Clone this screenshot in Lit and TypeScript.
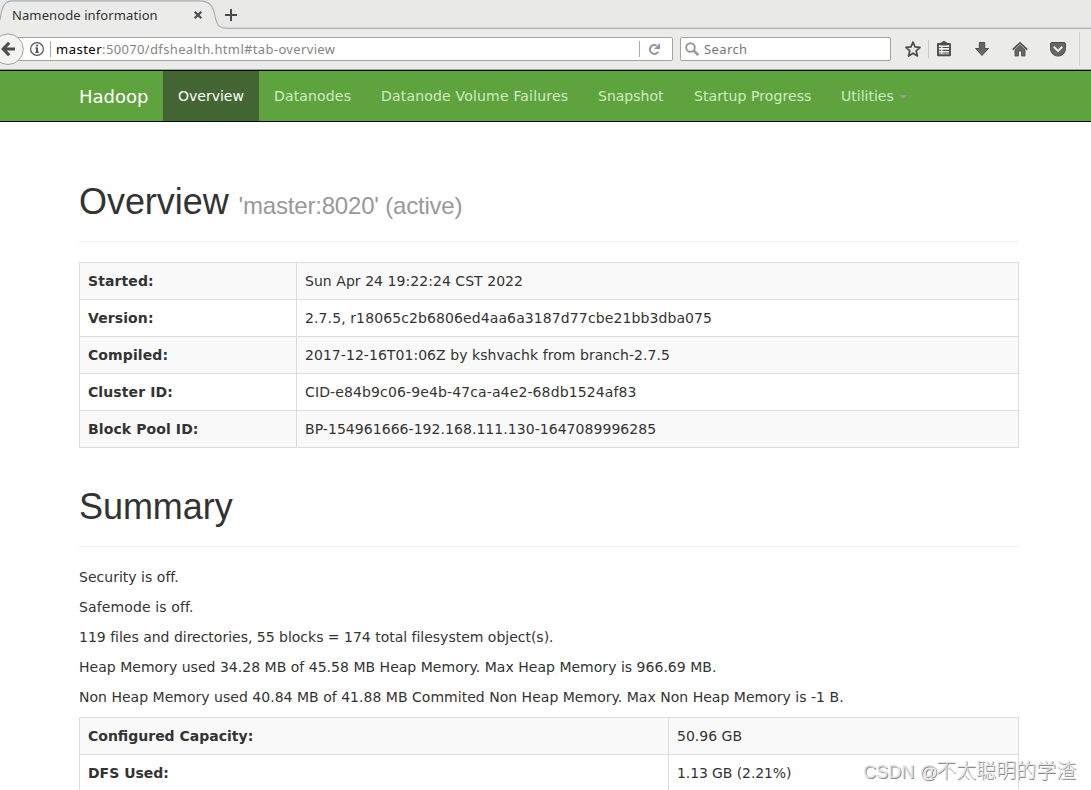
import { LitElement, html, css } from "lit";
import { customElement } from "lit/decorators.js";

@customElement("browser-chrome")
class BrowserChrome extends LitElement {
  static styles = css`
    :host { display: block; position: relative; height: 71px; box-sizing: border-box; background: #ebebe9; border-bottom: 1px solid #0a0a0a; font: 13px "Noto Sans", "Open Sans", sans-serif; color: #2e3436; }
    .line { position: absolute; left: 0; right: 0; bottom: 0; height: 1px; background: #a3a3a1; }
    .tabs { position: relative; height: 29px; display: flex; align-items: center; background: #e8e8e6; }
    .shape { position: absolute; left: 0; top: 0; }
    .title { position: relative; margin-left: 12px; width: 181px; line-height: 18px; padding-top: 1px; letter-spacing: 0.1px; white-space: nowrap; }
    .close { position: relative; width: 10px; height: 10px; }
    .plus { position: relative; margin-left: 21px; width: 14px; height: 14px; }
    .bar { height: 41px; display: flex; align-items: center; position: relative; }
    .url { box-sizing: border-box; width: 673px; height: 24px; margin-top: -1px; border: 1px solid #a3a3a1; border-left: 0; border-radius: 0 2px 2px 0; background: #fff; display: flex; align-items: center; color: #858585; }
    .back { position: absolute; left: -8px; top: 4px; }
    .info { margin-left: 29px; display: block; }
    .sep { width: 1px; height: 16px; background: #aaa; margin: 0 5px 0 5px; }
    .addr { flex: 1; white-space: nowrap; letter-spacing: 0.35px; }
    .host { color: #000; letter-spacing: 0.5px; }
    .reload { margin: 0 11px 0 3px; display: block; }
    .search { box-sizing: border-box; width: 211px; height: 24px; margin: -1px 0 0 7px; border: 1px solid #a3a3a1; border-radius: 2px; background: #fff; display: flex; align-items: center; color: #777; gap: 5px; padding-left: 4px; letter-spacing: 0.4px; }
    .icons { flex: 1; height: 41px; display: block; }
    svg { display: block; }
  `;
  render() {
    return html`
      <div class="tabs">
        <svg class="shape" width="1091" height="29">
          <path d="M0 29V14C3 4 5 .8 12 .8H201C212 .8 213 6 215 16C217 26 219 28.3 228 28.3H1091V29Z" fill="#ebebe9"/>
          <path d="M0 20C2 5 5 .8 13 .8H199C210 .8 213 6 215 16C217 26 219 28.3 228 28.3H1091" fill="none" stroke="#a8adb2" stroke-width="1.2"/>
        </svg>
        <span class="title">Namenode information</span>
        <svg class="close" viewBox="0 0 10 10"><path d="M1.7 1.7L8.3 8.3M8.3 1.7L1.7 8.3" stroke="#4c4f50" stroke-width="2.2"/></svg>
        <svg class="plus" viewBox="0 0 14 14"><path d="M7 1V13M1 7H13" stroke="#4a4a4a" stroke-width="2"/></svg>
      </div>
      <div class="bar">
        <div class="url">
          <svg class="info" width="16" height="16" viewBox="0 0 16 16"><circle cx="8" cy="8" r="6.4" fill="none" stroke="#555" stroke-width="1.2"/><path d="M6.4 7H8V11M6.2 11.4H9.9" stroke="#555" stroke-width="1.3" fill="none"/><path d="M8 7V11" stroke="#555" stroke-width="2"/><circle cx="8" cy="4.6" r="1.1" fill="#555"/></svg>
          <span class="sep"></span>
          <span class="addr"><span class="host">master</span>:50070/dfshealth.html#tab-overview</span>
          <span class="sep"></span>
          <svg class="reload" width="13" height="14" viewBox="0 0 13 14"><path d="M10.3 9.8A4.5 4.5 0 1 1 8.7 3.5" fill="none" stroke="#8796a5" stroke-width="2"/><path d="M12 1V7H6Z" fill="#8796a5"/></svg>
        </div>
        <svg class="back" width="33" height="33" viewBox="0 0 33 33"><circle cx="16" cy="16.2" r="15.3" fill="#f3f3f2" stroke="#a3a3a1"/><path d="M17.2 9.7L11.2 16L17.2 22.3M11.4 16H23" fill="none" stroke="#4d4d4d" stroke-width="3.1"/></svg>
        <div class="search">
          <svg width="14" height="14" viewBox="0 0 14 14"><circle cx="5.5" cy="5.5" r="4.3" fill="none" stroke="#979797" stroke-width="1.9"/><path d="M8.5 8.5L13.2 13" stroke="#979797" stroke-width="2.5"/></svg>
          <span>Search</span>
        </div>
        <svg class="icons" viewBox="891 29 200 41">
          <path d="M913 42L915 46.8L920 47.3L916.2 50.8L917.4 56L913 53.2L908.6 56L909.8 50.8L906 47.3L911 46.8Z" fill="none" stroke="#4d4d4d" stroke-width="1.7" stroke-linejoin="round"/>
          <path d="M928.5 40V58" stroke="#c9c9c7"/>
          <path d="M938 44H950V55.3H938Z" fill="#f3f3f2" stroke="#4d4d4d" stroke-width="1.9" stroke-linejoin="round"/>
          <path d="M940.3 43L944 40.8L947.7 43V45.4H940.3Z" fill="#4d4d4d"/>
          <path d="M942.5 47.5H949M942.5 50.3H949M942.5 53H949M939.3 47.5H941M939.3 50.3H941M939.3 53H941" stroke="#4d4d4d" stroke-width="1.2"/>
          <path d="M979.3 42.5H984.7V48.5H988.5L982 55.5L975.5 48.5H979.3Z" fill="#666" stroke="#4d4d4d"/>
          <path d="M1012.8 49.6L1020 42.9L1027.2 49.6" fill="none" stroke="#4d4d4d" stroke-width="1.7"/>
          <path d="M1015 49.7L1020 45.2L1025 49.7V56H1021.5V51H1018.5V56H1015Z" fill="#666" stroke="#4d4d4d" stroke-width=".8"/>
          <path d="M1052 42.5H1064Q1065.5 42.5 1065.5 44V48.5C1065.5 53 1062 56 1058 56S1050.5 53 1050.5 48.5V44Q1050.5 42.5 1052 42.5Z" fill="#666" stroke="#4d4d4d"/>
          <path d="M1053.7 46.8L1058 50.9L1062.3 46.8" fill="none" stroke="#eee" stroke-width="2"/>
          <path d="M1079.5 32V66" stroke="#d4d4d2"/>
        </svg>
      </div>
      <div class="line"></div>`;
  }
}

@customElement("app-root")
class AppRoot extends LitElement {
  static styles = css`
    :host { display: block; position: relative; width: 1091px; height: 790px; overflow: hidden; background: #fff; color: #333; font: 14px/20px "DejaVu Sans", sans-serif; }
    .nav { height: 50px; display: flex; background: #5fa33e; border-bottom: 1px solid #0a0a0a; padding-left: 64px; line-height: 20px; color: #d0edc3; white-space: nowrap; }
    .brand { padding: 16px 15px 14px; font-size: 18px; color: #fff; width: 69px; }
    .item { padding: 15px; box-sizing: border-box; }
    .item.active { background: #446633; color: #fff; width: 96px; }
    .datanodes { width: 107px; letter-spacing: 0.16px; }
    .failures { width: 217px; letter-spacing: 0.19px; }
    .snapshot { width: 96px; }
    .progress { width: 147px; letter-spacing: 0.08px; }
    .caret { display: inline-block; margin-left: 1px; vertical-align: middle; border: 4px solid transparent; border-top-color: #999; border-bottom: 0; }
    .main { margin: 0 72px 0 79px; padding-top: 61px; }
    h1 { margin: 0 0 20px; height: 40px; padding-bottom: 18px; border-bottom: 1px solid #eee; font: 36px/37px "Liberation Sans", sans-serif; font-weight: 400; white-space: nowrap; letter-spacing: -0.05px; }
    small { font-size: 24px; color: #999; line-height: 1; letter-spacing: -0.19px; }
    table { width: 940px; border-collapse: collapse; table-layout: fixed; margin-bottom: 40px; }
    td, th { height: 20px; padding: 8px; border: 1px solid #ddd; text-align: left; font-weight: 400; }
    th { font-weight: 700; }
    tr:nth-child(odd) { background: #f9f9f9; }
    .info th { width: 200px; letter-spacing: 0.1px; }
    .info td { letter-spacing: 0.05px; }
    .info tr:nth-child(2) td { letter-spacing: 0.105px; }
    .info tr:nth-child(4) td { letter-spacing: 0.125px; }
    .stats th { width: 572px; }
    .stats tr:nth-child(2) td { letter-spacing: -0.1px; }
    p { margin: 0 0 10px; letter-spacing: 0.02px; }
    p:nth-of-type(2) { letter-spacing: 0.12px; }
    p:nth-of-type(3) { letter-spacing: -0.01px; }
    .mark { position: absolute; left: 863px; top: 757px; font: 300 20px/28px "Liberation Sans", "Noto Sans CJK SC", sans-serif; color: #e4e4e4; text-shadow: 1px 1px 0 #8c8c8c; white-space: nowrap; }
    .latin { display: inline-block; width: 73px; font-size: 18px; letter-spacing: 0.1px; }
  `;
  private nav = [
    ["Overview", "active"],
    ["Datanodes", "datanodes"],
    ["Datanode Volume Failures", "failures"],
    ["Snapshot", "snapshot"],
    ["Startup Progress", "progress"],
  ];
  private info = [
    ["Started:", "Sun Apr 24 19:22:24 CST 2022"],
    ["Version:", "2.7.5, r18065c2b6806ed4aa6a3187d77cbe21bb3dba075"],
    ["Compiled:", "2017-12-16T01:06Z by kshvachk from branch-2.7.5"],
    ["Cluster ID:", "CID-e84b9c06-9e4b-47ca-a4e2-68db1524af83"],
    ["Block Pool ID:", "BP-154961666-192.168.111.130-1647089996285"],
  ];
  private stats = [
    ["Configured Capacity:", "50.96 GB"],
    ["DFS Used:", "1.13 GB (2.21%)"],
  ];
  private lines = [
    "Security is off.",
    "Safemode is off.",
    "119 files and directories, 55 blocks = 174 total filesystem object(s).",
    "Heap Memory used 34.28 MB of 45.58 MB Heap Memory. Max Heap Memory is 966.69 MB.",
    "Non Heap Memory used 40.84 MB of 41.88 MB Commited Non Heap Memory. Max Non Heap Memory is -1 B.",
  ];
  private table(cls: string, rows: string[][]) {
    return html`<table class=${cls}><tbody>${rows.map(([k, v]) => html`<tr><th>${k}</th><td>${v}</td></tr>`)}</tbody></table>`;
  }
  render() {
    return html`
      <browser-chrome></browser-chrome>
      <nav class="nav">
        <span class="brand">Hadoop</span>
        ${this.nav.map(([t, c]) => html`<span class="item ${c}">${t}</span>`)}
        <span class="item">Utilities <span class="caret"></span></span>
      </nav>
      <main class="main">
        <h1>Overview <small>'master:8020' (active)</small></h1>
        ${this.table("info", this.info)}
        <h1>Summary</h1>
        ${this.lines.map((l) => html`<p>${l}</p>`)}
        ${this.table("stats", this.stats)}
      </main>
      <div class="mark"><span class="latin">CSDN @</span>不太聪明的学渣</div>`;
  }
}
